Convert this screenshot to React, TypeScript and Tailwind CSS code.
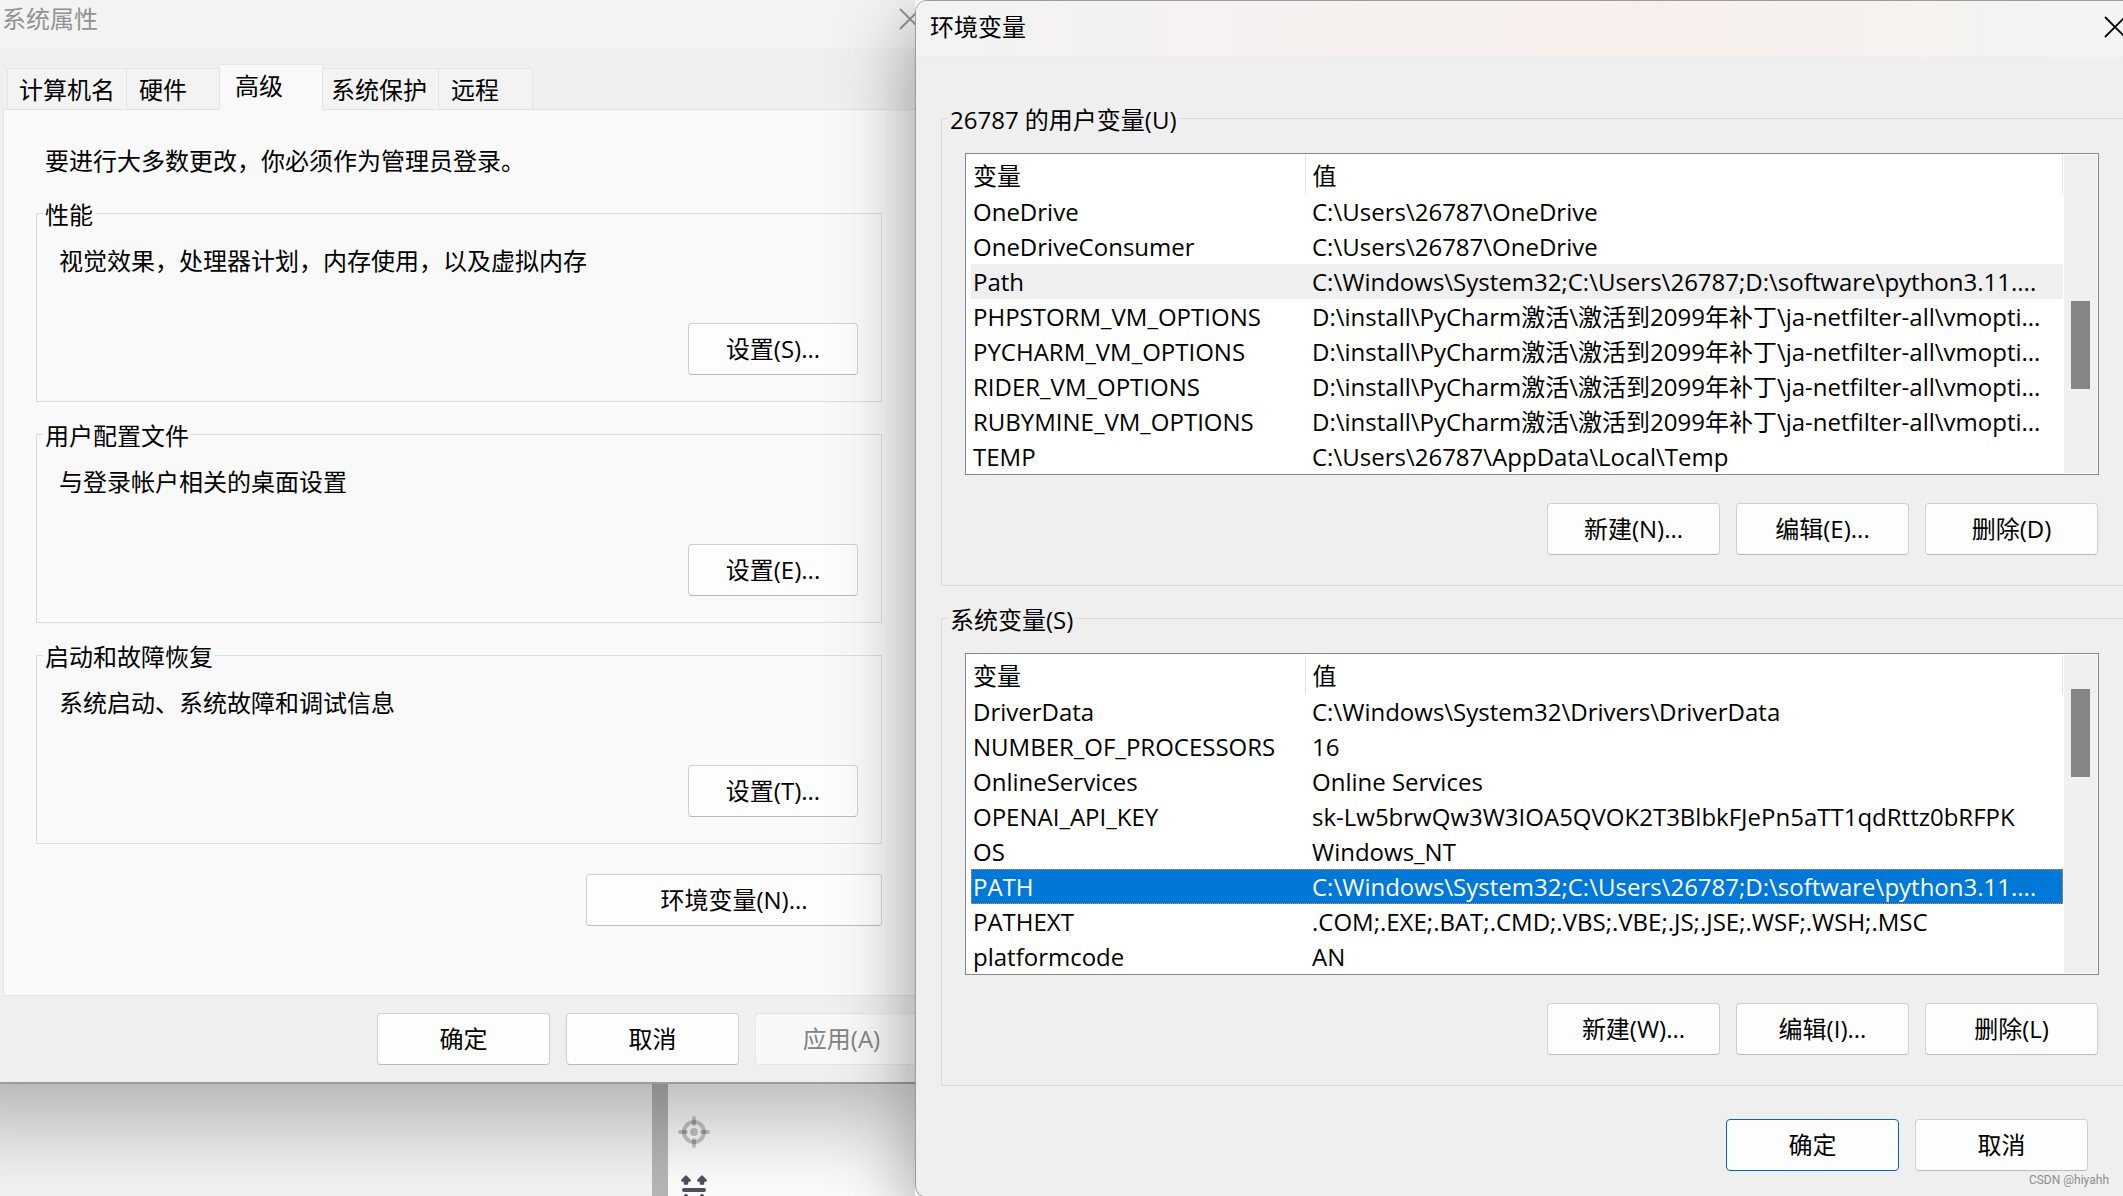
import React from 'react';
import clsx from 'clsx';

interface Variable {
  name: string;
  value: string;
}

const userVariables: Variable[] = [
  { name: 'OneDrive', value: 'C:\\Users\\26787\\OneDrive' },
  { name: 'OneDriveConsumer', value: 'C:\\Users\\26787\\OneDrive' },
  { name: 'Path', value: 'C:\\Windows\\System32;C:\\Users\\26787;D:\\software\\python3.11....' },
  { name: 'PHPSTORM_VM_OPTIONS', value: 'D:\\install\\PyCharm激活\\激活到2099年补丁\\ja-netfilter-all\\vmopti...' },
  { name: 'PYCHARM_VM_OPTIONS', value: 'D:\\install\\PyCharm激活\\激活到2099年补丁\\ja-netfilter-all\\vmopti...' },
  { name: 'RIDER_VM_OPTIONS', value: 'D:\\install\\PyCharm激活\\激活到2099年补丁\\ja-netfilter-all\\vmopti...' },
  { name: 'RUBYMINE_VM_OPTIONS', value: 'D:\\install\\PyCharm激活\\激活到2099年补丁\\ja-netfilter-all\\vmopti...' },
  { name: 'TEMP', value: 'C:\\Users\\26787\\AppData\\Local\\Temp' },
];

const systemVariables: Variable[] = [
  { name: 'DriverData', value: 'C:\\Windows\\System32\\Drivers\\DriverData' },
  { name: 'NUMBER_OF_PROCESSORS', value: '16' },
  { name: 'OnlineServices', value: 'Online Services' },
  { name: 'OPENAI_API_KEY', value: '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' },
  { name: 'OS', value: 'Windows_NT' },
  { name: 'PATH', value: 'C:\\Windows\\System32;C:\\Users\\26787;D:\\software\\python3.11....' },
  { name: 'PATHEXT', value: '.COM;.EXE;.BAT;.CMD;.VBS;.VBE;.JS;.JSE;.WSF;.WSH;.MSC' },
  { name: 'platformcode', value: 'AN' },
];

const tabs = [
  { label: '计算机名', size: 'w-[120px] pl-[11px]' },
  { label: '硬件', size: 'w-[93px] pl-3' },
  { label: '高级', size: 'w-[103px] pl-[15px]' },
  { label: '系统保护', size: 'w-[116px] pl-2' },
  { label: '远程', size: 'w-[94px] pl-3' },
];

const sections = [
  { title: '性能', text: '视觉效果，处理器计划，内存使用，以及虚拟内存', button: '设置(S)...' },
  { title: '用户配置文件', text: '与登录帐户相关的桌面设置', button: '设置(E)...' },
  { title: '启动和故障恢复', text: '系统启动、系统故障和调试信息', button: '设置(T)...' },
];

interface ButtonProps {
  children: React.ReactNode;
  width?: string;
  primary?: boolean;
  disabled?: boolean;
}

const Button: React.FC<ButtonProps> = ({ children, width = 'w-[173px]', primary, disabled }) => (
  <button
    type="button"
    disabled={disabled}
    className={clsx(
      'h-[52px] shrink-0 rounded border',
      width,
      primary && 'border-[#0067c0] bg-[#fdfdfd]',
      disabled && 'border-[#e5e5e5] bg-[#f8f8f8] text-[#838383]',
      !primary && !disabled && 'border-[#d0d0d0] border-b-[#b9b9b9] bg-[#fdfdfd]'
    )}
  >
    {children}
  </button>
);

const CloseButton: React.FC<{ className?: string }> = ({ className }) => (
  <button type="button" aria-label="关闭" className={className}>
    <svg width="22" height="22" viewBox="0 0 22 22" fill="none" stroke="currentColor" strokeWidth="1.8">
      <path d="M1 1 21 21M21 1 1 21" />
    </svg>
  </button>
);

interface GroupProps {
  title: string;
  className?: string;
  children: React.ReactNode;
}

const Group: React.FC<GroupProps> = ({ title, className, children }) => (
  <fieldset className="min-w-0 border border-[#dcdcdc]">
    <legend className="ml-1.5 px-0.5 pt-1 leading-6">{title}</legend>
    <div className={className}>{children}</div>
  </fieldset>
);

interface VariableListProps {
  label: string;
  rows: Variable[];
  hovered?: string;
  selected?: string;
  thumbOffset: string;
}

const VariableList: React.FC<VariableListProps> = ({ label, rows, hovered, selected, thumbOffset }) => (
  <div className="flex border border-[#828790] bg-white pt-px pr-px pl-[5px]">
    <table aria-label={label} className="min-w-0 flex-1 table-fixed border-collapse text-left whitespace-nowrap">
      <thead>
        <tr className="h-[39px]">
          <th className="w-[334px] border-r border-[#e5e5e5] p-0 pt-0.5 pl-0.5 font-normal">变量</th>
          <th className="border-r border-[#e5e5e5] p-0 pt-0.5 pl-[7px] font-normal">值</th>
        </tr>
      </thead>
      <tbody>
        {rows.map((row) => (
          <tr
            key={row.name}
            className={clsx(
              'h-[35px]',
              row.name === hovered && 'bg-[#efefef]',
              row.name === selected && 'bg-[#0078d7] text-white outline-1 -outline-offset-1 outline-dotted outline-[#e08a3c]'
            )}
          >
            <td className="p-0 pl-0.5 leading-8">{row.name}</td>
            <td className="overflow-hidden p-0 pl-[7px] leading-8">{row.value}</td>
          </tr>
        ))}
      </tbody>
    </table>
    <div className={clsx('mb-px ml-px flex w-[33px] justify-center bg-[#f0f0f0] pr-px', thumbOffset)}>
      <div className="h-[88px] w-[19px] bg-[#858585]" />
    </div>
  </div>
);

// The window is dragged partly past the left screen edge, hence the -left-24 / pl-24 pair
const SystemProperties: React.FC = () => (
  <section
    aria-label="系统属性"
    className="absolute top-0 -left-24 w-[1032px] border-b-2 border-[#9b9b9b] bg-[#efefef] shadow-[0_32px_96px_rgba(0,0,0,0.32)]"
  >
    <header className="flex h-12 items-start justify-between bg-[#f3f3f3] pt-2 pr-[15px] pl-[98px] text-[#929292]">
      <h1 className="leading-[22px]">系统属性</h1>
      <CloseButton />
    </header>
    <div className="pl-24">
      <div role="tablist" className="flex h-[61px] items-end pl-[7px]">
        {tabs.map((tab) => {
          const active = tab.label === '高级';
          return (
            <button
              key={tab.label}
              type="button"
              role="tab"
              aria-selected={active}
              className={clsx(
                'border-t border-r border-[#e4e4e4] text-left',
                tab.size,
                active ? 'relative -mb-px h-[46px] bg-[#f9f9f9] pb-1' : 'h-[41px] bg-[#f3f3f3] pt-0.5',
                tab.label === '计算机名' && 'border-l'
              )}
            >
              {tab.label}
            </button>
          );
        })}
      </div>
      <div className="mr-2 ml-[3px] flex flex-col border border-[#e4e4e4] bg-[#f9f9f9] pt-[35px] pr-[45px] pb-[69px] pl-8">
        <p className="mb-[22px] pl-[9px] leading-8">要进行大多数更改，你必须作为管理员登录。</p>
        <div className="flex flex-col gap-[18px]">
          {sections.map((section) => (
            <Group key={section.title} title={section.title} className="pt-[18px] pr-[23px] pb-[26px] pl-[22px]">
              <p className="leading-8">{section.text}</p>
              <div className="mt-[46px] flex justify-end">
                <Button width="w-[170px]">{section.button}</Button>
              </div>
            </Group>
          ))}
        </div>
        <div className="mt-[30px] flex justify-end">
          <Button width="w-[296px]">环境变量(N)...</Button>
        </div>
      </div>
      <footer className="flex justify-end gap-4 py-[17px] pr-2">
        <Button>确定</Button>
        <Button>取消</Button>
        <Button disabled>应用(A)</Button>
      </footer>
    </div>
  </section>
);

const EnvironmentVariables: React.FC = () => (
  <section
    aria-label="环境变量"
    className="absolute top-0 -right-6 left-[915px] overflow-hidden rounded-xl border border-[#9b9b9b] bg-[#efefef]"
  >
    <header className="flex h-14 items-center justify-between bg-linear-to-r from-[#f3f3f3] via-[#f8f0ed] via-60% to-[#f3f4f2] pr-5 pb-[5px] pl-3.5">
      <h1>环境变量</h1>
      <CloseButton />
    </header>
    <div className="flex flex-col gap-[18px] pt-[47px] pr-5 pl-[25px]">
      <Group title="26787 的用户变量(U)" className="pt-[21px] pr-[26px] pb-[30px] pl-[23px]">
        <VariableList label="用户变量" rows={userVariables} hovered="Path" thumbOffset="pt-[146px]" />
        <div className="mt-7 flex justify-end gap-4 pr-px">
          <Button>新建(N)...</Button>
          <Button>编辑(E)...</Button>
          <Button>删除(D)</Button>
        </div>
      </Group>
      <Group title="系统变量(S)" className="pt-[21px] pr-[26px] pb-[30px] pl-[23px]">
        <VariableList label="系统变量" rows={systemVariables} selected="PATH" thumbOffset="pt-[34px]" />
        <div className="mt-7 flex justify-end gap-4 pr-px">
          <Button>新建(W)...</Button>
          <Button>编辑(I)...</Button>
          <Button>删除(L)</Button>
        </div>
      </Group>
    </div>
    <footer className="flex justify-end gap-4 pt-[33px] pr-[58px] pb-[26px]">
      <Button primary>确定</Button>
      <Button>取消</Button>
    </footer>
  </section>
);

const EditorBackdrop: React.FC = () => (
  <div className="flex h-full">
    <div className="w-[652px] bg-[#f5f5f5]" />
    <div className="w-4 bg-[#b8b8b8]" />
    <div className="flex flex-1 flex-col justify-end gap-[26px] bg-white pl-2.5">
      <svg width="32" height="32" viewBox="0 0 32 32" fill="none" stroke="#000000" strokeOpacity="0.22">
        <circle cx="16" cy="16" r="10" strokeWidth="4" />
        <circle cx="16" cy="16" r="4" fill="#000000" fillOpacity="0.22" stroke="none" />
        <path d="M16 2v6M16 24v6M2 16h6M24 16h6" strokeWidth="4" strokeLinecap="round" />
      </svg>
      <svg className="-mb-2.5" width="32" height="32" viewBox="0 0 32 32" fill="#4f4f63" stroke="#4f4f63">
        <path
          d="M8 2 12 6V7H9.500V10H6.500V7H4V6ZM24 2 28 6V7H25.500V10H22.500V7H20V6Z"
          strokeWidth="1.5"
          strokeLinejoin="round"
        />
        <path d="M6 16H26" strokeWidth="4" strokeLinecap="round" />
        <path d="M8 22v6M24 22v6" strokeWidth="4" strokeLinecap="round" />
      </svg>
    </div>
  </div>
);

export default function App() {
  return (
    <main className="relative h-screen overflow-hidden bg-white font-['Open_Sans','Noto_Sans_CJK_SC',sans-serif] text-2xl text-black [font-kerning:none]">
      <EditorBackdrop />
      <SystemProperties />
      {/* the dialog's shadow only falls on what is behind it */}
      <div className="absolute inset-y-0 -right-6 left-[915px] shadow-[0_24px_72px_rgba(0,0,0,0.4)]" />
      <EnvironmentVariables />
      <span className="absolute right-3.5 bottom-2 font-['Roboto',sans-serif] text-xs leading-4 text-[#8c8c8c]">
        CSDN @hiyahh
      </span>
    </main>
  );
}
